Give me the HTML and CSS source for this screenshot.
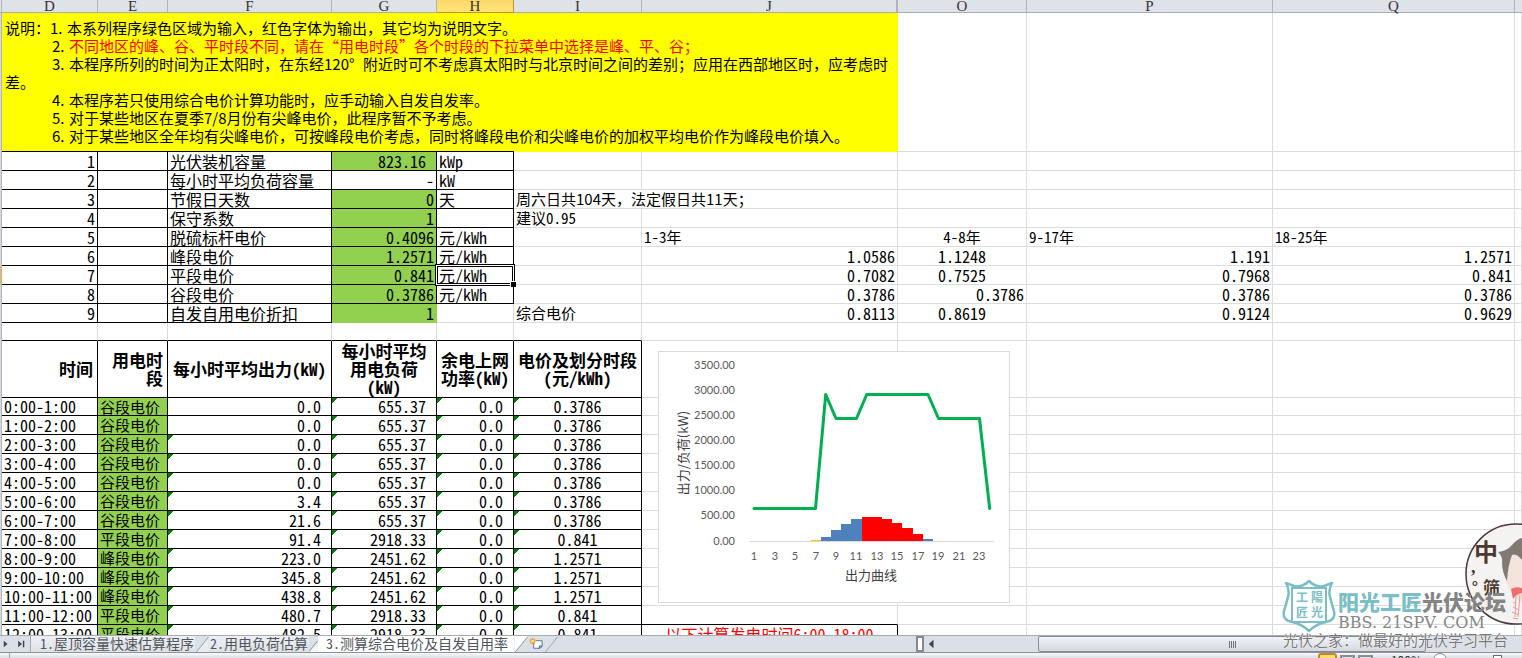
FILE: index.html
```html
<!DOCTYPE html>
<html lang="zh-CN">
<head>
<meta charset="utf-8">
<title>测算综合电价及自发自用率</title>
<link rel="stylesheet" href="styles.css">
</head>
<body>
<main class="sheet">
<table class="grid">
<colgroup><col class="c-head"><col class="c-d"><col class="c-e"><col class="c-f"><col class="c-g"><col class="c-h"><col class="c-i"><col class="c-j"><col class="c-o"><col class="c-p"><col class="c-q"><col></colgroup>
<thead>
<tr class="letters"><th></th><th>D</th><th>E</th><th>F</th><th>G</th><th class="current">H</th><th>I</th><th class="hidden-after">J</th><th>O</th><th>P</th><th>Q</th><th></th></tr>
</thead>
<tbody>
<tr class="notes-row"><th></th><td class="notes" colspan="7">
<p class="first">说明：<span class="no">1.</span>本系列程序绿色区域为输入，红色字体为输出，其它均为说明文字。</p>
<p><span class="no">2.</span><span class="red">不同地区的峰、谷、平时段不同，请在“用电时段”各个时段的下拉菜单中选择是峰、平、谷；</span></p>
<p><span class="no">3.</span>本程序所列的时间为正太阳时，在东经120<span class="degree">°</span>附近时可不考虑真太阳时与北京时间之间的差别；应用在西部地区时，应考虑时差。</p>
<p><span class="no">4.</span>本程序若只使用综合电价计算功能时，应手动输入自发自发率。</p>
<p><span class="no">5.</span>对于某些地区在夏季7/8月份有尖峰电价，此程序暂不予考虑。</p>
<p><span class="no">6.</span>对于某些地区全年均有尖峰电价，可按峰段电价考虑，同时将峰段电价和尖峰电价的加权平均电价作为峰段电价填入。</p>
</td><td></td><td></td><td></td><td></td></tr>
<tr class="first-row"><th></th><td class="b r">1</td><td class="b"></td><td class="b">光伏装机容量</td><td class="b r green inset">823.16</td><td class="b">kWp</td><td class="under-notes"></td><td class="under-notes"></td><td></td><td></td><td></td><td></td></tr>
<tr><th></th><td class="b r">2</td><td class="b"></td><td class="b">每小时平均负荷容量</td><td class="b r">-</td><td class="b">kW</td><td></td><td></td><td></td><td></td><td></td><td></td></tr>
<tr><th></th><td class="b r">3</td><td class="b"></td><td class="b">节假日天数</td><td class="b r green">0</td><td class="b">天</td><td class="small wide" colspan="2">周六日共104天，法定假日共11天；</td><td></td><td></td><td></td><td></td></tr>
<tr><th></th><td class="b r">4</td><td class="b"></td><td class="b">保守系数</td><td class="b r green">1</td><td class="b"></td><td class="small">建议0.95</td><td></td><td></td><td></td><td></td><td></td></tr>
<tr><th></th><td class="b r">5</td><td class="b"></td><td class="b">脱硫标杆电价</td><td class="b r green">0.4096</td><td class="b">元/kWh</td><td></td><td class="small">1-3年</td><td class="small c">4-8年</td><td class="small">9-17年</td><td class="small">18-25年</td><td></td></tr>
<tr><th></th><td class="b r">6</td><td class="b"></td><td class="b">峰段电价</td><td class="b r green">1.2571</td><td class="b">元/kWh</td><td></td><td class="r">1.0586</td><td class="c">1.1248</td><td class="r">1.191</td><td class="r">1.2571</td><td></td></tr>
<tr><th class="current"></th><td class="b r">7</td><td class="b"></td><td class="b">平段电价</td><td class="b r green">0.841</td><td class="b selected">元/kWh</td><td></td><td class="r">0.7082</td><td class="c">0.7525</td><td class="r">0.7968</td><td class="r">0.841</td><td></td></tr>
<tr><th></th><td class="b r">8</td><td class="b"></td><td class="b">谷段电价</td><td class="b r green">0.3786</td><td class="b">元/kWh</td><td></td><td class="r">0.3786</td><td class="r">0.3786</td><td class="r">0.3786</td><td class="r">0.3786</td><td></td></tr>
<tr><th></th><td class="b r">9</td><td class="b"></td><td class="b">自发自用电价折扣</td><td class="r green plain">1</td><td></td><td class="small">综合电价</td><td class="r">0.8113</td><td class="c">0.8619</td><td class="r">0.9124</td><td class="r">0.9629</td><td></td></tr>
<tr class="gap"><th></th><td></td><td></td><td></td><td></td><td></td><td></td><td class="free"></td><td class="free"></td><td class="free"></td><td class="free"></td><td class="free"></td></tr>
<tr class="titles"><th></th><td class="b r time">时间</td><td class="b r">用电时<br>段</td><td class="b c">每小时平均出力(kW)</td><td class="b c">每小时平均<br>用电负荷<br>(kW)</td><td class="b c">余电上网<br>功率(kW)</td><td class="b c">电价及划分时段<br>(元/kWh)</td><td></td><td></td><td></td><td></td><td></td></tr>
<tr class="short"><th></th><td class="b">0:00-1:00</td><td class="b green small">谷段电价</td><td class="b r inset">0.0</td><td class="b r inset flag">655.37</td><td class="b r inset flag">0.0</td><td class="b c flag">0.3786</td><td></td><td></td><td></td><td></td><td></td></tr>
<tr><th></th><td class="b">1:00-2:00</td><td class="b green small">谷段电价</td><td class="b r inset">0.0</td><td class="b r inset flag">655.37</td><td class="b r inset flag">0.0</td><td class="b c flag">0.3786</td><td></td><td></td><td></td><td></td><td></td></tr>
<tr><th></th><td class="b">2:00-3:00</td><td class="b green small">谷段电价</td><td class="b r inset flag">0.0</td><td class="b r inset flag">655.37</td><td class="b r inset flag">0.0</td><td class="b c flag">0.3786</td><td></td><td></td><td></td><td></td><td></td></tr>
<tr><th></th><td class="b">3:00-4:00</td><td class="b green small">谷段电价</td><td class="b r inset flag">0.0</td><td class="b r inset flag">655.37</td><td class="b r inset flag">0.0</td><td class="b c flag">0.3786</td><td></td><td></td><td></td><td></td><td></td></tr>
<tr><th></th><td class="b">4:00-5:00</td><td class="b green small">谷段电价</td><td class="b r inset flag">0.0</td><td class="b r inset flag">655.37</td><td class="b r inset flag">0.0</td><td class="b c flag">0.3786</td><td></td><td></td><td></td><td></td><td></td></tr>
<tr><th></th><td class="b">5:00-6:00</td><td class="b green small">谷段电价</td><td class="b r inset flag">3.4</td><td class="b r inset flag">655.37</td><td class="b r inset flag">0.0</td><td class="b c flag">0.3786</td><td></td><td></td><td></td><td></td><td></td></tr>
<tr><th></th><td class="b">6:00-7:00</td><td class="b green small">谷段电价</td><td class="b r inset flag">21.6</td><td class="b r inset flag">655.37</td><td class="b r inset flag">0.0</td><td class="b c flag">0.3786</td><td></td><td></td><td></td><td></td><td></td></tr>
<tr><th></th><td class="b">7:00-8:00</td><td class="b green small">平段电价</td><td class="b r inset flag">91.4</td><td class="b r inset flag">2918.33</td><td class="b r inset flag">0.0</td><td class="b c flag">0.841</td><td></td><td></td><td></td><td></td><td></td></tr>
<tr><th></th><td class="b">8:00-9:00</td><td class="b green small">峰段电价</td><td class="b r inset flag">223.0</td><td class="b r inset flag">2451.62</td><td class="b r inset flag">0.0</td><td class="b c flag">1.2571</td><td></td><td></td><td></td><td></td><td></td></tr>
<tr><th></th><td class="b">9:00-10:00</td><td class="b green small">峰段电价</td><td class="b r inset flag">345.8</td><td class="b r inset flag">2451.62</td><td class="b r inset flag">0.0</td><td class="b c flag">1.2571</td><td></td><td></td><td></td><td></td><td></td></tr>
<tr><th></th><td class="b">10:00-11:00</td><td class="b green small">峰段电价</td><td class="b r inset flag">438.8</td><td class="b r inset flag">2451.62</td><td class="b r inset flag">0.0</td><td class="b c flag">1.2571</td><td></td><td></td><td></td><td></td><td></td></tr>
<tr><th></th><td class="b">11:00-12:00</td><td class="b green small">平段电价</td><td class="b r inset flag">480.7</td><td class="b r inset flag">2918.33</td><td class="b r inset flag">0.0</td><td class="b c flag">0.841</td><td class="line-below"></td><td></td><td></td><td></td><td></td></tr>
<tr><th></th><td class="b">12:00-13:00</td><td class="b green small">平段电价</td><td class="b r inset flag">482.5</td><td class="b r inset flag">2918.33</td><td class="b r inset flag">0.0</td><td class="b c flag">0.841</td><td class="b c red">以下计算发电时间6:00-18:00</td><td></td><td></td><td></td><td></td></tr>
</tbody>
</table>

<svg class="chart" viewBox="0 0 352 252" role="img" aria-label="出力曲线">
<rect x="0.5" y="0.5" width="351" height="251" fill="#fff" stroke="#d9d9d9"/>
<g class="axis end"><text x="77" y="18">3500.00</text><text x="77" y="43">3000.00</text><text x="77" y="68">2500.00</text><text x="77" y="93">2000.00</text><text x="77" y="118">1500.00</text><text x="77" y="143">1000.00</text><text x="77" y="168">500.00</text><text x="77" y="194">0.00</text></g>
<g class="axis mid"><text x="96" y="209">1</text><text x="117" y="209">3</text><text x="137" y="209">5</text><text x="158" y="209">7</text><text x="178" y="209">9</text><text x="198" y="209">11</text><text x="219" y="209">13</text><text x="239" y="209">15</text><text x="260" y="209">17</text><text x="280" y="209">19</text><text x="301" y="209">21</text><text x="321" y="209">23</text></g>
<path d="M91 190.5H336" stroke="#d9d9d9"/>
<path d="M153 189h10v1h-10z" fill="#ffc000"/>
<path d="M163 190v-4h10v-7h10v-6h10v-5h11v22zM265 190v-2h10v2z" fill="#4f81bd"/>
<path d="M204 190v-24h20v2h10v4h10v5h11v6h10v7z" fill="#f00"/>
<path d="M96 157.500H157.500L167.700 43.500L178 67.500H198.500L208.700 43.500H270L280.500 67.500H321.500L331.700 157.500" fill="none" stroke="#00b050" stroke-width="3" stroke-linecap="round" stroke-linejoin="round"/>
<text class="axis-title" x="213" y="229">出力曲线</text>
<text class="axis-title" transform="translate(30 102) rotate(-90)">出力/负荷(kW)</text>
</svg>

<svg class="avatar" viewBox="0 0 57 102" aria-hidden="true">
<defs><clipPath id="round"><circle cx="51" cy="51" r="50"/></clipPath></defs>
<circle cx="51" cy="51" r="50" fill="#f5f3f1"/>
<g clip-path="url(#round)">
<path d="M42 32Q39 45 41 57Q45 73 57 80V22Z" fill="#f2e3dc"/>
<path d="M33 29Q42 28 47 22Q52 16 57 15V37Q51 30 47 32Q43 42 42 58Q37 49 37 39Q38 34 33 29Z" fill="#827874"/>
<path d="M46 66Q50 63 57 65V70Q51 71 48 76Z" fill="#ee6d70"/>
<path d="M48 79l3 2m-3 3l6 3m-7 2l7 3m-6 3l5 1M51 73l-1 21M55 72l-2 22" stroke="#ef9698" fill="none"/>
</g>
<circle cx="51" cy="51" r="50" fill="none" stroke="#4c3740" stroke-width="1.500"/>
<g class="avatar-text"><text x="9" y="38" font-size="24">中</text><text x="6" y="50" font-size="18">,</text><text x="7" y="61" font-size="15">。</text><text x="18" y="71" font-size="17">筛</text></g>
</svg>

<div class="mark">
<svg class="shield" viewBox="0 0 54 54" aria-hidden="true">
<path d="M27 2Q34 9 42 7L50 4Q46 11 48 18Q50 26 52 32Q54 41 44 43Q34 45 27 52Q20 45 10 43Q0 41 2 32Q4 26 6 18Q8 11 4 4L12 7Q20 9 27 2Z" fill="#fff" stroke="#7bbec5" stroke-width="2.500" stroke-linejoin="round"/>
<path d="M10 9h34v34H10z" fill="#fff" stroke="#7bbec5" stroke-width="2"/>
<g class="seal"><text x="20" y="23">工</text><text x="35" y="23">陽</text><text x="20" y="38">匠</text><text x="35" y="38">光</text></g>
</svg>
<div class="mark-text"><div class="mark-name"><span>阳光工匠</span>光伏论坛</div><div class="mark-site">BBS. 21SPV. COM</div></div>
</div>
</main>

<nav class="tabs">
<button class="nav" aria-label="下一张"><svg viewBox="0 0 12 17"><path d="M4 5v7l4-3.500z"/></svg></button>
<button class="nav last" aria-label="最后一张"><svg viewBox="0 0 12 17"><path d="M3 5v7l4-3.500zM8 5h1.500v7H8z"/></svg></button>
<button class="tab first-tab">1.屋顶容量快速估算程序</button>
<svg class="slant" viewBox="0 0 14 17"><path d="M0 17L14 1V17Z" fill="#e9ecf0"/><path d="M1 17L14 1" stroke="#8f969f"/></svg>
<button class="tab">2.用电负荷估算</button>
<svg class="slant narrow" viewBox="0 0 9 17"><path d="M1 17L9 7V17Z" fill="#f5f6f8"/><path d="M0 16L9 5" stroke="#8f969f"/></svg>
<button class="tab active">3.测算综合电价及自发自用率</button>
<svg class="slant" viewBox="0 0 14 17"><path d="M0 0H14L0 17Z" fill="#fff"/><path d="M1 17L14 1" stroke="#8f969f"/></svg>
<button class="add" aria-label="插入工作表"><svg viewBox="0 0 16 17"><path d="M5.500 6V13H12L14.500 11V5H8" fill="#fff" stroke="#536f9c"/><path d="M11.500 13.500v-3h3z" fill="#a9bddf" stroke="#536f9c"/><path d="M4.500 2v7M1 5.500h7M2 3l5 5M7 3L2 8" stroke="#e4a32b" stroke-width="1.300"/><circle cx="4.500" cy="5.500" r="1.300" fill="#fff0a8"/></svg></button>
<svg class="slant" viewBox="0 0 14 17"><path d="M1 17L14 1" stroke="#9ba1a9"/></svg>
<span class="fill"></span>
<span class="splitter"></span>
<button class="back" aria-label="向左滚动"><svg viewBox="0 0 12 17"><path d="M8 4v9L3 8.500z"/></svg></button>
<div class="track"><div class="thumb"><i></i><i></i><i></i><i></i></div></div>
<div class="slogan">光伏之家：做最好的光伏学习平台</div>
</nav>
<footer class="status">
<span class="rule-left"></span>
<span class="view"></span><span class="view-icon"></span><span class="view-icon"></span>
<span class="percent">100%</span>
<span class="minus"></span><span class="knob"></span>
</footer>
</body>
</html>
```
FILE: styles.css
```css
* { box-sizing: border-box; }

body {
  margin: 0;
  height: 100vh;
  display: flex;
  flex-direction: column;
  overflow: hidden;
  background: #fff;
  color: #000;
  font-family: "Noto Sans CJK SC", sans-serif;
  font-size: 16px;
  font-weight: 400;
}

button {
  border: 0;
  padding: 0;
  background: none;
  font: inherit;
  color: inherit;
}

.sheet {
  flex: 1;
  min-height: 0;
  position: relative;
  overflow: hidden;
}

/* Grid */
.grid {
  width: 100%;
  table-layout: fixed;
  border-collapse: separate;
  border-spacing: 0;
}

.c-head { width: 2px; }
.c-d { width: 96px; }
.c-e { width: 70px; }
.c-f { width: 164px; }
.c-g { width: 105px; }
.c-h { width: 77px; }
.c-i { width: 128px; }
.c-j { width: 256px; }
.c-o { width: 129px; }
.c-p { width: 246px; }
.c-q { width: 242px; }

.grid td {
  height: 19px;
  padding: 0 2px;
  border-right: 1px solid #dadcdd;
  border-bottom: 1px solid #dadcdd;
  line-height: 18px;
  white-space: nowrap;
  vertical-align: bottom;
  font-feature-settings: "hwid";
}

.grid th {
  padding: 0;
  background: #d4d9e0;
  border-right: 1px solid #b0b5bc;
}

.grid th.current { background: #f5b942; }

.grid .letters th {
  height: 13px;
  background: #dfe2e7;
  border-bottom: 1px solid #a9adb3;
  color: #333;
  font: 15px/12px "Liberation Serif", serif;
}

.grid .letters th.current {
  background: linear-gradient(#fbd76b, #ffe475);
  border-color: #c58f35;
}

.grid .letters th.hidden-after { border-right-width: 2px; }
.grid .letters th:last-child { border-right: 0; }

.grid td.b { border-color: #000; }
.grid td.r { text-align: right; }
.grid td.c { text-align: center; }
.grid td.inset { padding-right: 10px; }
.grid td.small { font-size: 15px; }
.grid td.wide { font-feature-settings: normal; }
.grid td.red { color: #f00; }
.grid td.green { background-color: #92d050; }
.grid td.plain { border-color: #92d050; }
.grid td.flag { background-image: linear-gradient(135deg, #008000 4px, transparent 4px); }
.grid td.line-below { border-bottom-color: #000; }

.grid .notes-row td { border-bottom: 0; }

.grid td.notes {
  height: 138px;
  padding: 6px 8px 6px 3px;
  border: 0;
  background: #ff0;
  font-size: 15px;
  white-space: normal;
  vertical-align: top;
  font-feature-settings: normal;
}

.notes p {
  margin: 0;
  text-indent: 47px;
  line-height: 18px;
}

.notes .first { text-indent: 0; }
.notes .no {
  display: inline-block;
  width: 17px;
  text-indent: 0;
}
.notes .degree {
  display: inline-block;
  width: 14px;
  text-indent: 0;
}
.notes .red { color: #f00; }

.grid .first-row td {
  height: 20px;
  border-top: 1px solid #dadcdd;
}
.grid .first-row td.b { border-top-color: #000; }
.grid .first-row .under-notes { border-top-color: #ff0; }

.grid .gap td {
  height: 18px;
  border-bottom-color: #000;
}
.grid .gap td.free { border-bottom-color: #dadcdd; }

.grid .titles td {
  height: 57px;
  line-height: 18px;
  vertical-align: middle;
  font-size: 17px;
  font-weight: 700;
}
.grid .titles td.r { padding-right: 4px; }
.grid .short td { height: 18px; line-height: 17px; }

/* Active cell frame with its fill handle */
.grid td.selected { position: relative; }
.selected::before {
  content: "";
  position: absolute;
  inset: -2px;
  border: 1px solid #000;
  box-shadow: inset 0 0 0 1px #fff, inset 0 0 0 2px #000;
}
.selected::after {
  content: "";
  position: absolute;
  right: -3px;
  bottom: -3px;
  width: 5px;
  height: 5px;
  background: #000;
  border: 1px solid #fff;
  border-width: 1px 0 0 1px;
}

/* Floating chart */
.chart {
  position: absolute;
  left: 658px;
  top: 351px;
  width: 352px;
  height: 252px;
}
.axis {
  font-family: Lato, sans-serif;
  font-size: 11px;
  fill: #595959;
}
.end { text-anchor: end; }
.mid { text-anchor: middle; }
.axis-title {
  font-size: 13px;
  text-anchor: middle;
  fill: #404040;
}

/* Site mark over the sheet corner */
.avatar {
  position: absolute;
  right: 0;
  bottom: 10px;
  width: 57px;
  height: 102px;
}
.avatar-text {
  font-family: "Liberation Serif", "Noto Sans CJK SC", serif;
  font-weight: 700;
  fill: #4c3a30;
}
.mark {
  position: absolute;
  right: 16px;
  bottom: 2px;
  display: flex;
  gap: 2px;
}
.shield {
  width: 54px;
  height: 54px;
}
.seal {
  font-size: 12px;
  font-weight: 700;
  text-anchor: middle;
  fill: #7bbec5;
}
.mark-text {
  width: 168px;
  padding-top: 7px;
  font-weight: 900;
  color: #858585;
  white-space: nowrap;
}
.mark-name {
  font-size: 21px;
  line-height: 30px;
}
.mark-name span { color: #7bbec5; }
.mark-site {
  font: 400 16px/14px "DejaVu Serif", serif;
}

/* Sheet tabs and horizontal scroll bar */
.tabs {
  flex: none;
  position: relative;
  display: flex;
  height: 18px;
  background: #dbe0e7;
  border-top: 1px solid #a6abb3;
  border-bottom: 1px solid #8d929a;
  color: #50555c;
  font-size: 14px;
}
.tabs svg {
  display: block;
  height: 16px;
}
.nav, .back {
  width: 12px;
  fill: #3f444b;
}
.nav.last {
  width: 19px;
  padding-left: 3px;
  border-right: 1px solid #a6abb3;
}
.nav.last svg { width: 12px; }
.tab {
  padding: 0 1px 2px;
  background: linear-gradient(#eef0f3, #dde1e6);
  line-height: 14px;
  white-space: nowrap;
  font-feature-settings: "hwid";
}
.tab.first-tab { padding-left: 9px; }
.tab.active {
  padding: 0 6px 2px 8px;
  background: #fff;
}
.slant {
  flex: none;
  width: 14px;
}
.slant.narrow { width: 9px; }
.add { width: 16px; }
.add svg { width: 16px; fill: none; }
.fill { flex: 1; }
.splitter {
  width: 8px;
  border: 2px solid #858a91;
  background: #fff;
}
.back { width: 14px; margin-left: 2px; }
.track {
  width: 582px;
  padding-left: 98px;
}
.thumb {
  display: flex;
  align-items: center;
  justify-content: center;
  gap: 1px;
  width: 388px;
  height: 16px;
  border: 1px solid #858b94;
  border-radius: 2px;
  background: linear-gradient(#f1f3f7, #d4d9e1);
}
.thumb i {
  width: 1px;
  height: 7px;
  background: #70757c;
}
.slogan {
  position: absolute;
  right: 14px;
  top: -5px;
  font-size: 15px;
  line-height: 18px;
  color: #777;
  text-shadow: 0 0 1px #fff, 0 0 1px #fff;
}

/* Status bar, cut by the window edge */
.status {
  flex: none;
  display: flex;
  align-items: flex-start;
  justify-content: flex-end;
  gap: 3px;
  height: 5px;
  padding-right: 20px;
  overflow: hidden;
  background: linear-gradient(#f8f9fa, #dadee4);
}
.rule-left {
  width: 1px;
  height: 5px;
  margin: 0 auto 0 9px;
  background: #9ea3aa;
}
.view {
  width: 19px;
  height: 12px;
  border: 2px solid #bd8a2c;
  border-radius: 3px;
  background: #ffdc6b;
}
.view-icon {
  width: 15px;
  height: 8px;
  margin-top: 2px;
  border: 2px solid #8a8e94;
}
.percent {
  margin: 1px 8px 0 15px;
  color: #333;
  font-size: 12px;
  line-height: 12px;
}
.minus {
  width: 14px;
  height: 14px;
  margin-right: 43px;
  border: 1px solid #7f848c;
  border-radius: 7px;
  background: #fff;
}
.knob {
  width: 9px;
  height: 10px;
  margin-top: 2px;
  border: 1px solid #666b73;
  background: #fff;
}
```
